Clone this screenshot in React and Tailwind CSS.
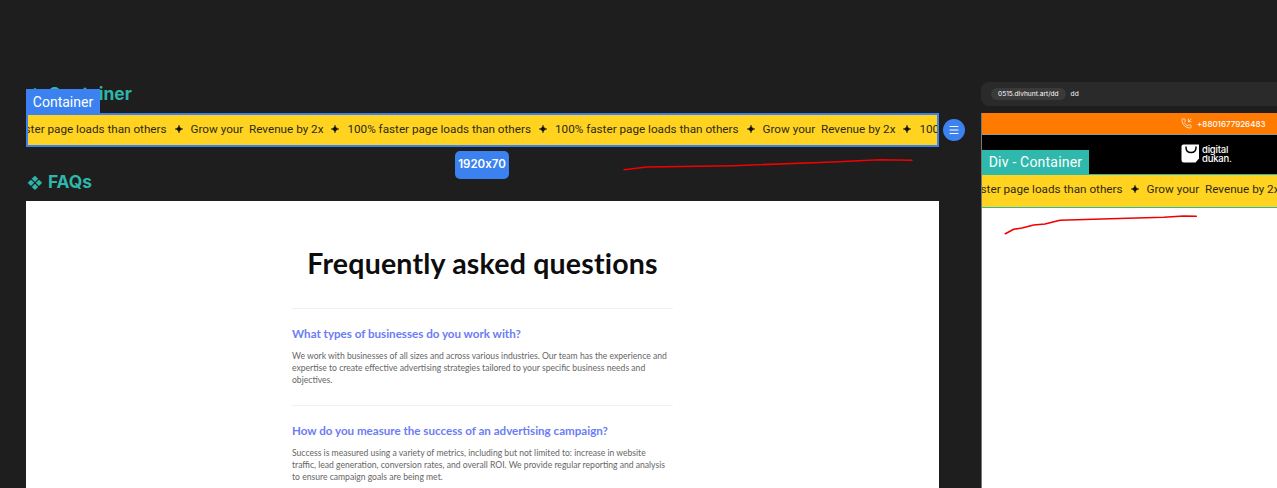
import React from "react";
import { PhoneIncoming, Menu } from "lucide-react";

function Star() {
  return (
    <svg width="8" height="8" viewBox="0 0 10 10" className="shrink-0">
      <path d="M5 0 C5.5 3 7 4.5 10 5 C7 5.5 5.5 7 5 10 C4.5 7 3 5.5 0 5 C3 4.5 4.5 3 5 0Z" fill="#111" stroke="#111" strokeWidth="0.5" />
    </svg>
  );
}

function Ticker({ items, offset }) {
  return (
    <div className={`flex items-center gap-[8px] whitespace-nowrap text-[11.7px] font-normal text-[#2e2a16] font-['Roboto',Arial,sans-serif] ${offset}`}>
      {items.map((t, i) => (
        <React.Fragment key={i}>
          <span className="shrink-0">{t}</span>
          {i < items.length - 1 && <Star />}
        </React.Fragment>
      ))}
    </div>
  );
}

const A = "100% faster page loads than others";
const B = "Grow your\u00a0 Revenue by 2x";

function Faq({ q, a, first }) {
  return (
    <div className={`border-t border-[#f1f1f1] w-[381px] pt-[17px] ${first ? "pb-[19px]" : ""}`}>
      <div className="text-[11.6px] leading-[15px] font-bold text-[#6b7cf6]">{q}</div>
      <p className="mt-[9px] text-[8.6px] leading-[12px] text-[#666]">{a}</p>
    </div>
  );
}

export default function App() {
  return (
    <div className="relative h-[488px] w-[1277px] overflow-hidden bg-[#1e1e1e] flex font-['Inter',sans-serif]">
      <div className="ml-[26px] w-[913px] shrink-0 flex flex-col pt-[84px]">
        <div className="relative h-[29px] shrink-0">
          <div className="text-[17.4px] leading-[20px] font-bold text-[#2fb5a9] pl-[1px]">
            <span className="text-[15px] mr-[5px]">❖</span>Container
          </div>
          <div className="absolute left-0 top-[5px] h-[24px] w-[74px] pt-[2px] bg-[#3b82f0] text-white text-[14px] font-['Roboto',sans-serif] flex items-center justify-center">Container</div>
        </div>
        <div className="relative h-[34px] shrink-0 border-2 border-[#3b82f0] bg-[#ffd320] flex items-center pb-[1px]">
          <div className="w-full overflow-hidden">
            <Ticker items={[A, B, A, A, B, A]} offset="-ml-[45px]" />
          </div>
          <div className="absolute left-[915px] top-[4px] size-[22px] rounded-full bg-[#3b82f0] flex items-center justify-center">
            <Menu size={12} color="white" strokeWidth={2} />
          </div>
          <div className="absolute left-[427px] top-[36px] h-[28px] w-[54px] rounded-[5px] bg-[#3b82f0] text-white text-[11.5px] font-semibold [font-feature-settings:'calt'_0] flex items-center justify-center">1920x70</div>
        </div>
        <div className="mt-[23px] shrink-0 text-[17.4px] leading-[24px] font-bold text-[#2fb5a9] pl-[1px]">
          <span className="text-[15px] mr-[5px]">❖</span>FAQs
        </div>
        <div className="mt-[6px] h-[287px] shrink-0 overflow-hidden bg-white flex flex-col items-center font-['Lato',sans-serif]">
          <h1 className="mt-[45px] shrink-0 text-[28.5px] leading-[34px] font-bold tracking-[0.2px] text-[#0d0d0d]">Frequently asked questions</h1>
          <div className="mt-[28px] flex flex-col">
            <Faq first q="What types of businesses do you work with?" a={<>We work with businesses of all sizes and across various industries. Our team has the experience and<br />expertise to create effective advertising strategies tailored to your specific business needs and<br />objectives.</>} />
            <Faq q="How do you measure the success of an advertising campaign?" a={<>Success is measured using a variety of metrics, including but not limited to: increase in website<br />traffic, lead generation, conversion rates, and overall ROI. We provide regular reporting and analysis<br />to ensure campaign goals are being met.</>} />
          </div>
        </div>
      </div>

      <div className="ml-[42px] flex-1 min-w-0 flex flex-col pt-[82px]">
        <div className="h-[24px] shrink-0 rounded-l-[8px] bg-[#2a2a2a] flex items-center pl-[10px] gap-[5px] text-[6.6px] text-white">
          <span className="h-[12px] rounded-full bg-[#3a3a3a] px-[7px] pt-[1px] flex items-center">0515.divhunt.art/dd</span>
          <span className="pt-[1px]">dd</span>
        </div>
        <div className="mt-[7px] flex-1 bg-white border-l border-[#777] flex flex-col">
          <div className="h-[22px] shrink-0 bg-[#ff7a00] border-b border-[#999] flex items-center pl-[199px] gap-[5px] text-white text-[8px] font-medium">
            <PhoneIncoming size={11} color="white" strokeWidth={1.5} />
            <span>+8801677926483</span>
          </div>
          <div className="relative h-[39px] shrink-0 bg-black pl-[199px] pt-[9px] flex items-start">
            <svg width="19" height="19" viewBox="0 0 19 19" className="shrink-0">
              <path d="M2.5 0.5 H18 V14.5 L14.5 18.5 H3 Q0.5 18.5 0.5 16 V2.5 Q0.5 0.5 2.5 0.5Z" fill="white" />
              <path d="M5 2.5 V3.5 Q5 8.5 10 8.5 Q15 8.5 15 3.5 V2.5" fill="none" stroke="black" strokeWidth="1.5" />
            </svg>
            <div className="ml-[2px] mt-[2px] text-white text-[9.5px] leading-[8.5px] font-medium tracking-[-0.2px]">digital<br />dukan.</div>
            <div className="absolute left-0 bottom-0 h-[24px] w-[107px] bg-[#2fb8ac] text-white text-[14px] tracking-[0.2px] font-['Roboto',sans-serif] flex items-center justify-center">Div - Container</div>
          </div>
          <div className="h-[34px] shrink-0 bg-[#ffd320] border-y border-[#2fb8ac] flex items-center overflow-hidden pb-[3px]">
            <Ticker items={[A, B]} offset="-ml-[43px]" />
          </div>
        </div>
      </div>

      <svg className="absolute inset-0 pointer-events-none" width="1277" height="488" fill="none" strokeLinejoin="round" strokeLinecap="round">
        <path d="M624 169.7 L647 167 L733 165.7 L833 162 L880 159.7 L912 160.3" stroke="#f00000" strokeWidth="1.6" />
        <path d="M1005.3 233.7 L1013.7 229.3 L1022 228 L1033.7 225 L1045 224 L1060 220.3 L1110 218.7 L1163.7 217.3 L1183.7 216 L1196.3 216.3" stroke="#f00000" strokeWidth="1.6" />
      </svg>
    </div>
  );
}
